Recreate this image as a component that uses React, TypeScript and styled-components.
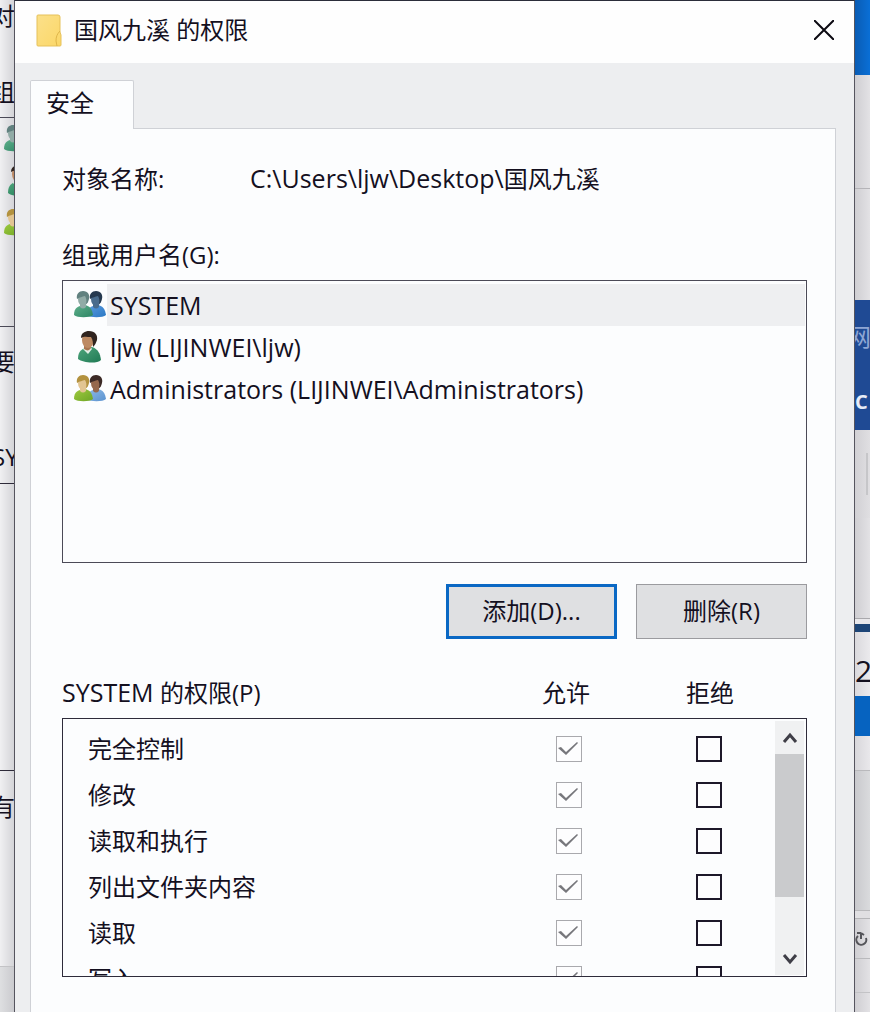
import React from "react";
import styled, { createGlobalStyle, css } from "styled-components";

const GlobalStyle = createGlobalStyle`
  *, *::before, *::after { box-sizing: border-box; }
  body {
    margin: 0;
    background: #e4e5e8;
    color: #14101f;
    font: 24px/32px "Open Sans", "Noto Sans CJK SC", sans-serif;
  }
  button, input { font: inherit; color: inherit; margin: 0; }
`;

const Desktop = styled.div`
  display: grid;
  grid-template-columns: 15px minmax(0, 1fr) 15px;
  min-height: 100vh;
`;

/* Strips of the windows that lie behind the dialog */
const Strip = styled.div<{ $side: "left" | "right" }>`
  display: flex;
  flex-direction: column;
  overflow: hidden;
  background: ${(p) =>
    p.$side === "left"
      ? "linear-gradient(to right, #f0f0f2, #d2d2d6)"
      : "linear-gradient(to right, #cfced2, #e3e2e5)"};
`;

const Block = styled.div<{
  $h?: number;
  $bg?: string;
  $line?: string;
  $align?: "flex-start" | "flex-end";
}>`
  display: flex;
  align-items: center;
  justify-content: ${(p) => p.$align || "flex-start"};
  overflow: hidden;
  ${(p) => (p.$h ? css`flex: none; height: ${p.$h}px;` : css`flex: 1;`)}
  ${(p) => p.$bg && css`background: ${p.$bg};`}
  ${(p) => p.$line && css`border-bottom: 1px solid ${p.$line};`}

  svg { flex: none; }
`;

const Cut = styled.span<{ $color?: string; $bold?: boolean; $shift?: boolean; $size?: number }>`
  flex: none;
  white-space: nowrap;
  color: ${(p) => p.$color || "#14101f"};
  font-weight: ${(p) => (p.$bold ? 700 : 400)};
  font-size: ${(p) => p.$size || 24}px;
  margin-left: ${(p) => (p.$shift ? -8 : 0)}px;
`;

const BackgroundScroll = styled.span`
  width: 2px;
  height: 42px;
  margin-left: 11px;
  background: #c6c6c9;
`;

const Dialog = styled.main`
  display: flex;
  flex-direction: column;
  border: 1px solid #55545e;
  border-top-color: #2b2d3a;
  border-bottom: 0;
  margin-left: -1px;
  background: #edeef0;
`;

const TitleBar = styled.header`
  display: flex;
  align-items: center;
  height: 62px;
  padding: 0 0 4px 21px;
  gap: 12px;
  background: #fefefe;
`;

const Title = styled.h1`
  flex: 1;
  margin: 0;
  font-size: 24px;
  font-weight: 400;
`;

const CloseButton = styled.button`
  display: grid;
  place-items: center;
  width: 60px;
  height: 58px;
  padding: 0;
  border: 0;
  background: none;
`;

const Body = styled.div`
  flex: 1;
  display: flex;
  flex-direction: column;
  padding: 17px 18px 0 15px;
`;

const Tab = styled.button`
  align-self: flex-start;
  position: relative;
  width: 104px;
  height: 49px;
  margin-bottom: -1px;
  padding: 0 0 4px 15px;
  border: 1px solid #cfd1d6;
  border-bottom: 0;
  border-radius: 2px 2px 0 0;
  background: #fcfdfe;
  text-align: left;
`;

const Panel = styled.section`
  flex: 1;
  padding: 34px 28px 34px 31px;
  border: 1px solid #cfd1d6;
  border-bottom: 0;
  background: #fcfdfe;
`;

const ObjectRow = styled.div`
  display: flex;
  height: 32px;
  margin-bottom: 44px;
`;

const ObjectLabel = styled.span`
  width: 188px;
`;

/* Latin runs are set one pixel larger than the Chinese text */
const Latin = styled.span`
  font-size: 25px;
  line-height: 24px;
`;

const GroupLabel = styled.div`
  margin-bottom: 9px;
`;

const UserList = styled.ul`
  height: 283px;
  margin: 0 0 21px;
  padding: 3px 1px 0 11px;
  border: 1px solid #4b4a57;
  list-style: none;
`;

const UserRow = styled.li`
  display: flex;
  align-items: center;
  height: 42px;
`;

const UserName = styled.span<{ $selected?: boolean }>`
  flex: 1;
  margin-left: 1px;
  padding: 5px 3px;
  font-size: 25px;
  background: ${(p) => (p.$selected ? "#eeeff1" : "transparent")};
`;

const Actions = styled.div`
  display: flex;
  justify-content: flex-end;
  gap: 19px;
  margin-bottom: 38px;
`;

const ActionButton = styled.button<{ $primary?: boolean }>`
  width: 171px;
  height: 55px;
  padding: 0 0 2px;
  border: ${(p) => (p.$primary ? "3px solid #0a68c4" : "1px solid #9b9b9f")};
  background: #dfe0e2;
`;

const PermissionHead = styled.div`
  display: grid;
  grid-template-columns: minmax(0, 1fr) 156px 132px;
  height: 32px;
  padding-right: 31px;
  margin-bottom: 9px;
`;

const HeadCell = styled.span`
  text-align: center;
`;

const PermissionBox = styled.div`
  display: flex;
  height: 259px;
  border: 1px solid #2e2b3a;
  overflow: hidden;
`;

const PermissionTable = styled.table`
  display: block;
  flex: 1;
  padding-top: 7px;
`;

const PermissionBody = styled.tbody`
  display: block;
`;

const PermissionRow = styled.tr`
  display: grid;
  grid-template-columns: minmax(0, 1fr) 148px 132px;
  align-items: center;
  height: 46px;
`;

const PermissionName = styled.th`
  padding: 0 0 0 25px;
  font-weight: 400;
  text-align: left;
`;

const CheckCell = styled.td`
  display: flex;
  justify-content: center;
  padding: 0;
`;

const Check = styled.input`
  appearance: none;
  width: 26px;
  height: 26px;
  border: 2px solid #1d1829;
  background: #fdfdfe;

  &:disabled {
    border: 1px solid #a9a9ad;
  }
  &:checked::after {
    content: "";
    display: block;
    width: 24px;
    height: 24px;
    background: #77777c;
    clip-path: polygon(1px 11px, 4px 10px, 9px 15px, 20px 5px, 21px 6px, 9px 18px);
  }
`;

const ScrollBar = styled.div`
  display: flex;
  flex-direction: column;
  width: 29px;
  margin: 2px 2px 1px 0;
  background: #f0f1f2;
`;

const ScrollButton = styled.button`
  display: grid;
  place-items: center;
  height: 33px;
  padding: 0;
  border: 0;
  background: none;
`;

const ScrollTrack = styled.div`
  flex: 1;
`;

const ScrollThumb = styled.div`
  height: 143px;
  background: #cacbcd;
`;

type PersonColors = { hair: string; skin: string; body: string; shade: string };

const Person = ({ c, x, id }: { c: PersonColors; x: number; id: string }) => (
  <g transform={`translate(${x} 0)`}>
    <defs>
      <linearGradient id={id} x1="0" y1="0" x2="1" y2="1">
        <stop offset="0" stopColor={c.body} />
        <stop offset="1" stopColor={c.shade} />
      </linearGradient>
    </defs>
    <path d="M0 24c0-5 2-8 6-9l5-1c5 1 7 4 8 10-3 3-16 3-19 0z" fill={`url(#${id})`} />
    <path d="M6 12h6v4c-2 2-4 2-6 0z" fill={c.skin} />
    <ellipse cx="9" cy="8" rx="5" ry="7" fill={c.skin} />
    <path d="M3 8C2 3 5 0 9 0c5 0 7 4 6 8-1 3-1 4-3 5 1-4 0-6-1-8-3 1-5 1-8 3z" fill={c.hair} />
  </g>
);

const green: PersonColors = { hair: "#61817f", skin: "#91aba6", body: "#5fb08b", shade: "#2d8565" };
const blue: PersonColors = { hair: "#26394f", skin: "#496b8c", body: "#5b9bde", shade: "#2b78c4" };
const blonde: PersonColors = { hair: "#b3923f", skin: "#e2c592", body: "#9fca3f", shade: "#6ea526" };
const brown: PersonColors = { hair: "#3c2a26", skin: "#96684c", body: "#8fbbe8", shade: "#5a92cf" };

const PairIcon = ({ left, right, id }: { left: PersonColors; right: PersonColors; id: string }) => (
  <svg width="32" height="28" viewBox="0 0 32 28" aria-hidden="true">
    <Person c={right} x={13} id={`${id}-b`} />
    <Person c={left} x={0} id={`${id}-a`} />
  </svg>
);

const SingleIcon = ({ id }: { id: string }) => (
  <svg width="32" height="34" viewBox="0 0 32 34" aria-hidden="true">
    <defs>
      <linearGradient id={id} x1="0" y1="0" x2="1" y2="1">
        <stop offset="0" stopColor="#4fa57c" />
        <stop offset="1" stopColor="#1f7a54" />
      </linearGradient>
    </defs>
    <path d="M4 29c0-6 2-9 7-11l7-1c6 2 8 6 9 13-4 4-18 3-23-1z" fill={`url(#${id})`} />
    <path d="M9 19l5 5 4-5-2-3-6 1z" fill="#e3ede6" />
    <path d="M10 13h7v5c-2 3-4 3-7 1z" fill="#a87550" />
    <ellipse cx="14" cy="10" rx="6" ry="8" fill="#bd8a63" />
    <path d="M7 8C7 3 11 1 15 1c6 0 9 4 8 9-1 3-2 5-4 7 0-4 0-7-2-10-4 0-7-1-10 1z" fill="#30241f" />
  </svg>
);

const FolderIcon = () => (
  <svg width="26" height="33" viewBox="0 0 26 33" aria-hidden="true">
    <defs>
      <linearGradient id="folder" x1="0" y1="0" x2="1" y2="1">
        <stop offset="0" stopColor="#fbe08a" />
        <stop offset="1" stopColor="#fbd768" />
      </linearGradient>
    </defs>
    <path
      d="M1 2q0-1 1-1h20q2 0 2 2v15l1 3v10q0 1-1 1H2q-1 0-1-1z"
      fill="url(#folder)"
      stroke="#e6c15a"
    />
    <path d="M24 17c-3 3-4 6-4 10l1 5" fill="none" stroke="#dfb64a" />
  </svg>
);

const Arrow = ({ down }: { down?: boolean }) => (
  <svg width="16" height="12" viewBox="0 0 16 12" aria-hidden="true">
    <path
      d={down ? "M2 2l6 7 6-7" : "M2 10l6-7 6 7"}
      fill="none"
      stroke="#3f3e47"
      strokeWidth="3"
    />
  </svg>
);

const users = [
  { name: "SYSTEM", icon: <PairIcon left={green} right={blue} id="system" />, selected: true },
  { name: "ljw (LIJINWEI\\ljw)", icon: <SingleIcon id="ljw" /> },
  {
    name: "Administrators (LIJINWEI\\Administrators)",
    icon: <PairIcon left={blonde} right={brown} id="admins" />,
  },
];

const permissions = ["完全控制", "修改", "读取和执行", "列出文件夹内容", "读取", "写入"];

const LeftStrip = () => (
  <Strip $side="left" aria-hidden="true">
    <Block $h={32} $align="flex-end"><Cut>对</Cut></Block>
    <Block $h={42} />
    <Block $h={36} $align="flex-end"><Cut>组</Cut></Block>
    <Block $h={8} $line="#4b4a57" />
    <Block $h={42}>
      <svg width="36" height="28" viewBox="-4 0 36 28"><Person c={green} x={0} id="bg1" /></svg>
    </Block>
    <Block $h={42}>
      <svg width="36" height="34" viewBox="-4 0 36 34"><SingleIcon id="bg2" /></svg>
    </Block>
    <Block $h={42}>
      <svg width="36" height="28" viewBox="-4 0 36 28"><Person c={blonde} x={0} id="bg3" /></svg>
    </Block>
    <Block $h={83} $line="#4b4a57" />
    <Block $h={70} $align="flex-end"><Cut>要</Cut></Block>
    <Block $h={42} />
    <Block $h={36}><Cut $shift>SY</Cut></Block>
    <Block $h={9} $line="#2e2b3a" />
    <Block $h={287} $line="#2e2b3a" />
    <Block $h={72} $align="flex-end"><Cut>有</Cut></Block>
    <Block $h={124} $line="#c3c3c6" />
    <Block $bg="linear-gradient(to right, #dedfe1, #c9c9cd)" />
  </Strip>
);

const RightStrip = () => (
  <Strip $side="right" aria-hidden="true">
    <Block $h={75} $bg="linear-gradient(to right, #0a5cb4, #0a6fd6)" />
    <Block $h={114} $line="#b5b4b8" />
    <Block $h={111} />
    <Block $h={74} $bg="#1f4a94"><Cut $color="#8ea6d4" $shift>网</Cut></Block>
    <Block $h={56} $bg="#1f4a94"><Cut $color="#e6ecf7" $bold $size={20}>C</Cut></Block>
    <Block $h={88} $bg="linear-gradient(to right, #d1d0d4, #e0dfe2)"><BackgroundScroll /></Block>
    <Block $h={101} $line="#a9a8ac" />
    <Block $h={5} $bg="#e9e8eb" />
    <Block $h={8} $bg="#1d4577" />
    <Block $h={14} $bg="linear-gradient(to right, #dad9dd, #ebeaed)" />
    <Block $h={50} $bg="linear-gradient(to right, #dad9dd, #ebeaed)"><Cut $size={30}>2</Cut></Block>
    <Block $h={40} $bg="#0663c0" />
    <Block $h={35} $bg="linear-gradient(to right, #d8d7db, #e9e8eb)" $line="#b9b9bc" />
    <Block $h={140} $bg="linear-gradient(to right, #c9c9cd, #dadbdd)" $line="#b9b9bc" />
    <Block $h={8} $bg="#e0dfe2" $line="#b5b5b8" />
    <Block $h={40} $line="#b9b9bc">
      <svg width="14" height="18" viewBox="0 0 14 18">
        <path d="M3 6a5 5 0 1 0 8 2M6 9V3M6 3H2M6 3l3 2" fill="none" stroke="#55555a" strokeWidth="2" />
      </svg>
    </Block>
    <Block $h={34} $line="#c3c3c6" />
    <Block />
  </Strip>
);

export default function App() {
  return (
    <>
      <GlobalStyle />
      <Desktop>
        <LeftStrip />
        <Dialog role="dialog" aria-labelledby="dialog-title">
          <TitleBar>
            <FolderIcon />
            <Title id="dialog-title">国风九溪 的权限</Title>
            <CloseButton type="button" aria-label="关闭">
              <svg width="20" height="20" viewBox="0 0 20 20" aria-hidden="true">
                <path d="M0 0l20 20M20 0L0 20" stroke="#0c0a12" strokeWidth="2" />
              </svg>
            </CloseButton>
          </TitleBar>
          <Body>
            <Tab type="button" role="tab" aria-selected="true" aria-controls="security">安全</Tab>
            <Panel id="security" role="tabpanel">
              <ObjectRow>
                <ObjectLabel>对象名称:</ObjectLabel>
                <span><Latin>C:\Users\ljw\Desktop\</Latin>国风九溪</span>
              </ObjectRow>
              <GroupLabel id="users-label">组或用户名(G):</GroupLabel>
              <UserList role="listbox" aria-labelledby="users-label">
                {users.map((u) => (
                  <UserRow key={u.name} role="option" aria-selected={!!u.selected}>
                    {u.icon}
                    <UserName $selected={u.selected}>{u.name}</UserName>
                  </UserRow>
                ))}
              </UserList>
              <Actions>
                <ActionButton type="button" $primary>添加(D)...</ActionButton>
                <ActionButton type="button">删除(R)</ActionButton>
              </Actions>
              <PermissionHead>
                <span id="permissions-label"><Latin>SYSTEM </Latin>的权限(P)</span>
                <HeadCell>允许</HeadCell>
                <HeadCell>拒绝</HeadCell>
              </PermissionHead>
              <PermissionBox>
                <PermissionTable aria-labelledby="permissions-label">
                  <PermissionBody>
                    {permissions.map((name) => (
                      <PermissionRow key={name}>
                        <PermissionName scope="row">{name}</PermissionName>
                        <CheckCell>
                          <Check type="checkbox" aria-label={`允许 ${name}`} defaultChecked disabled />
                        </CheckCell>
                        <CheckCell>
                          <Check type="checkbox" aria-label={`拒绝 ${name}`} />
                        </CheckCell>
                      </PermissionRow>
                    ))}
                  </PermissionBody>
                </PermissionTable>
                <ScrollBar>
                  <ScrollButton type="button" aria-label="向上滚动"><Arrow /></ScrollButton>
                  <ScrollTrack><ScrollThumb /></ScrollTrack>
                  <ScrollButton type="button" aria-label="向下滚动"><Arrow down /></ScrollButton>
                </ScrollBar>
              </PermissionBox>
            </Panel>
          </Body>
        </Dialog>
        <RightStrip />
      </Desktop>
    </>
  );
}
